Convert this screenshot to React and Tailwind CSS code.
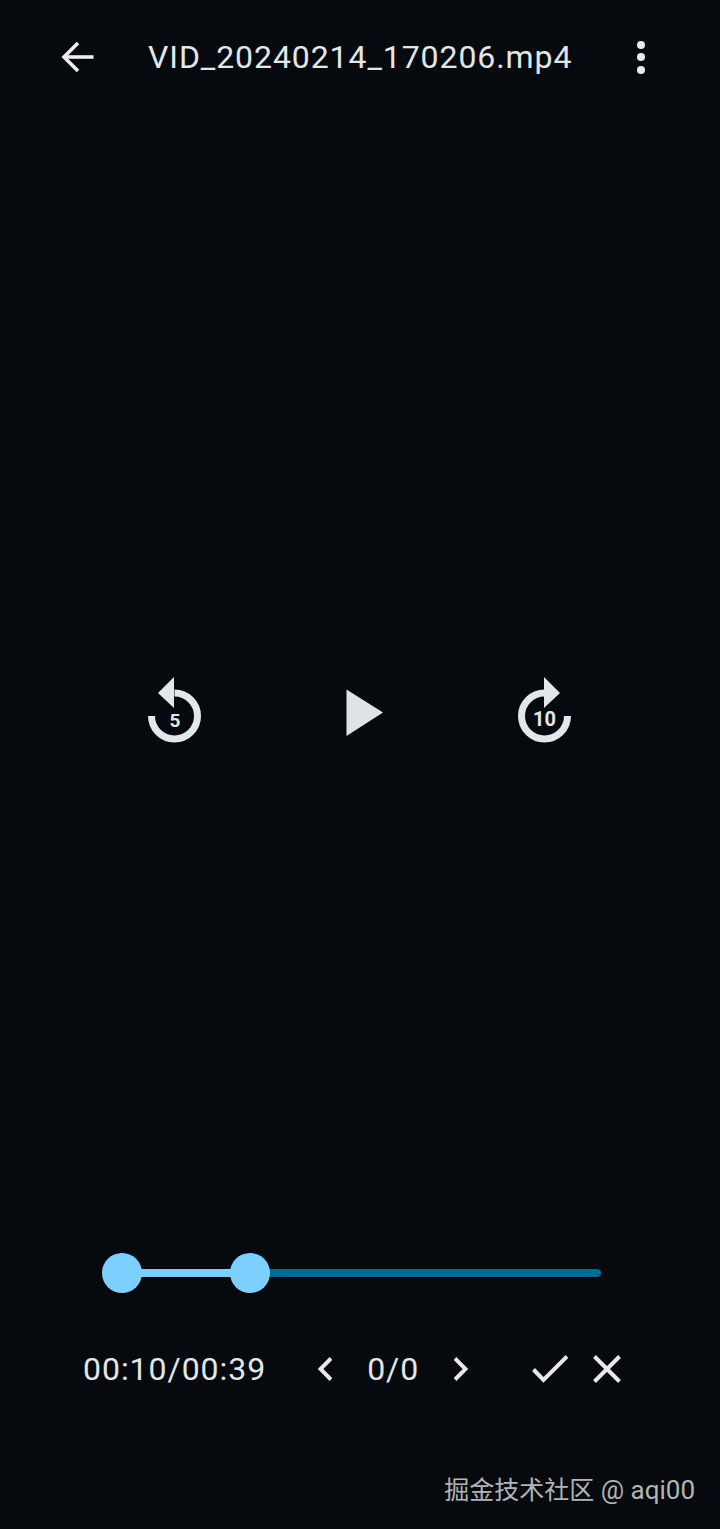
const ICON_COLOR = '#e3e6ea'

function BackIcon() {
  return (
    <svg width="34" height="32" viewBox="0 0 34 32" fill="none" stroke="#eceef0" strokeWidth="3.6">
      <path d="M32.5 16H3" />
      <path d="M17 2L3 16l14 14" />
    </svg>
  )
}

function MoreIcon() {
  return (
    <div className="flex flex-col gap-[4.5px]">
      <span className="w-[8px] h-[8px] rounded-full bg-[#e8eaed]" />
      <span className="w-[8px] h-[8px] rounded-full bg-[#e8eaed]" />
      <span className="w-[8px] h-[8px] rounded-full bg-[#e8eaed]" />
    </div>
  )
}

function ReplayIcon({ label }) {
  return (
    <svg width="56" height="76" viewBox="0 0 56 76" fill="none">
      <path d="M4.5 41a23 23 0 1 0 23-23" stroke={ICON_COLOR} strokeWidth="7" />
      <path d="M27 2L11 18l16 15z" fill={ICON_COLOR} />
      <text x="28" y="51.5" textAnchor="middle" fontFamily="Roboto, sans-serif" fontWeight="700" fontSize="19" fill={ICON_COLOR}>{label}</text>
    </svg>
  )
}

function ForwardIcon({ label }) {
  return (
    <svg width="56" height="76" viewBox="0 0 56 76" fill="none">
      <path d="M51.5 41a23 23 0 1 1-23-23" stroke={ICON_COLOR} strokeWidth="7" />
      <path d="M28 2l16 16-16 15z" fill={ICON_COLOR} />
      <text x="28.5" y="51" textAnchor="middle" fontFamily="Roboto, sans-serif" fontWeight="700" fontSize="20" fill={ICON_COLOR}>{label}</text>
    </svg>
  )
}

function PlayIcon() {
  return (
    <svg width="38" height="48" viewBox="0 0 38 48">
      <path d="M0.5 0.5L37 23.5 0.5 47z" fill="#dfe3e8" />
    </svg>
  )
}

function Chevron({ dir }) {
  return (
    <svg width="14" height="24" viewBox="0 0 14 24" fill="none" stroke="#e6e8ea" strokeWidth="4">
      <path d={dir === 'left' ? 'M13 1.5L2.5 12 13 22.5' : 'M1 1.5L11.5 12 1 22.5'} />
    </svg>
  )
}

function Slider() {
  return (
    <div className="h-[80px] shrink-0 pl-[122px] pr-[119px] flex items-center">
      <div className="relative w-full h-[8px] rounded-r-full bg-[#006b94]">
        <div className="h-full w-[128px] bg-[#7dcfff]" />
        <span className="absolute left-[-20px] top-[-16px] w-[40px] h-[40px] rounded-full bg-[#7dcfff]" />
        <span className="absolute left-[108px] top-[-16px] w-[40px] h-[40px] rounded-full bg-[#7dcfff]" />
      </div>
    </div>
  )
}

export default function App() {
  return (
    <div className="h-[1529px] flex flex-col bg-[#060a0f] font-['Roboto',sans-serif]">
      <header className="h-[114px] shrink-0 flex items-center pl-[61px]">
        <BackIcon />
        <h1 className="ml-[53px] text-[32px] font-normal tracking-[0.92px] text-[#e4e6e8]">VID_20240214_170206.mp4</h1>
        <div className="ml-[65px]"><MoreIcon /></div>
      </header>

      <main className="h-[1119px] shrink-0 pt-[78px] flex items-center pl-[147px]">
        <ReplayIcon label="5" />
        <div className="ml-[143px]"><PlayIcon /></div>
        <div className="ml-[132px]"><ForwardIcon label="10" /></div>
      </main>

      <Slider />

      <div className="h-[112px] shrink-0 flex items-center pl-[83px] text-[32px] tracking-[0.96px] text-[#e4e6e8]">
        <span>00:10/00:39</span>
        <div className="ml-[52px]"><Chevron dir="left" /></div>
        <span className="ml-[35px]">0/0</span>
        <div className="ml-[35px]"><Chevron dir="right" /></div>
        <svg className="ml-[64px]" width="36" height="28" viewBox="0 0 36 28" fill="none" stroke="#e6e8ea" strokeWidth="4">
          <path d="M1.5 14.5L11.5 25 35 1.5" />
        </svg>
        <svg className="ml-[24px]" width="30" height="30" viewBox="0 0 30 30" fill="none" stroke="#e6e8ea" strokeWidth="4">
          <path d="M2.5 2.5l25 25M27.5 2.5l-25 25" />
        </svg>
      </div>

      <div className="flex-1 flex justify-end pt-[46px] pr-[25px]">
        <span className="text-[25px] leading-[38px] text-[#b4b4b4] font-['Roboto','Noto_Sans_CJK_SC',sans-serif]">
          掘金技术社区<span className="text-[26px]"> @ aqi00</span>
        </span>
      </div>
    </div>
  )
}
